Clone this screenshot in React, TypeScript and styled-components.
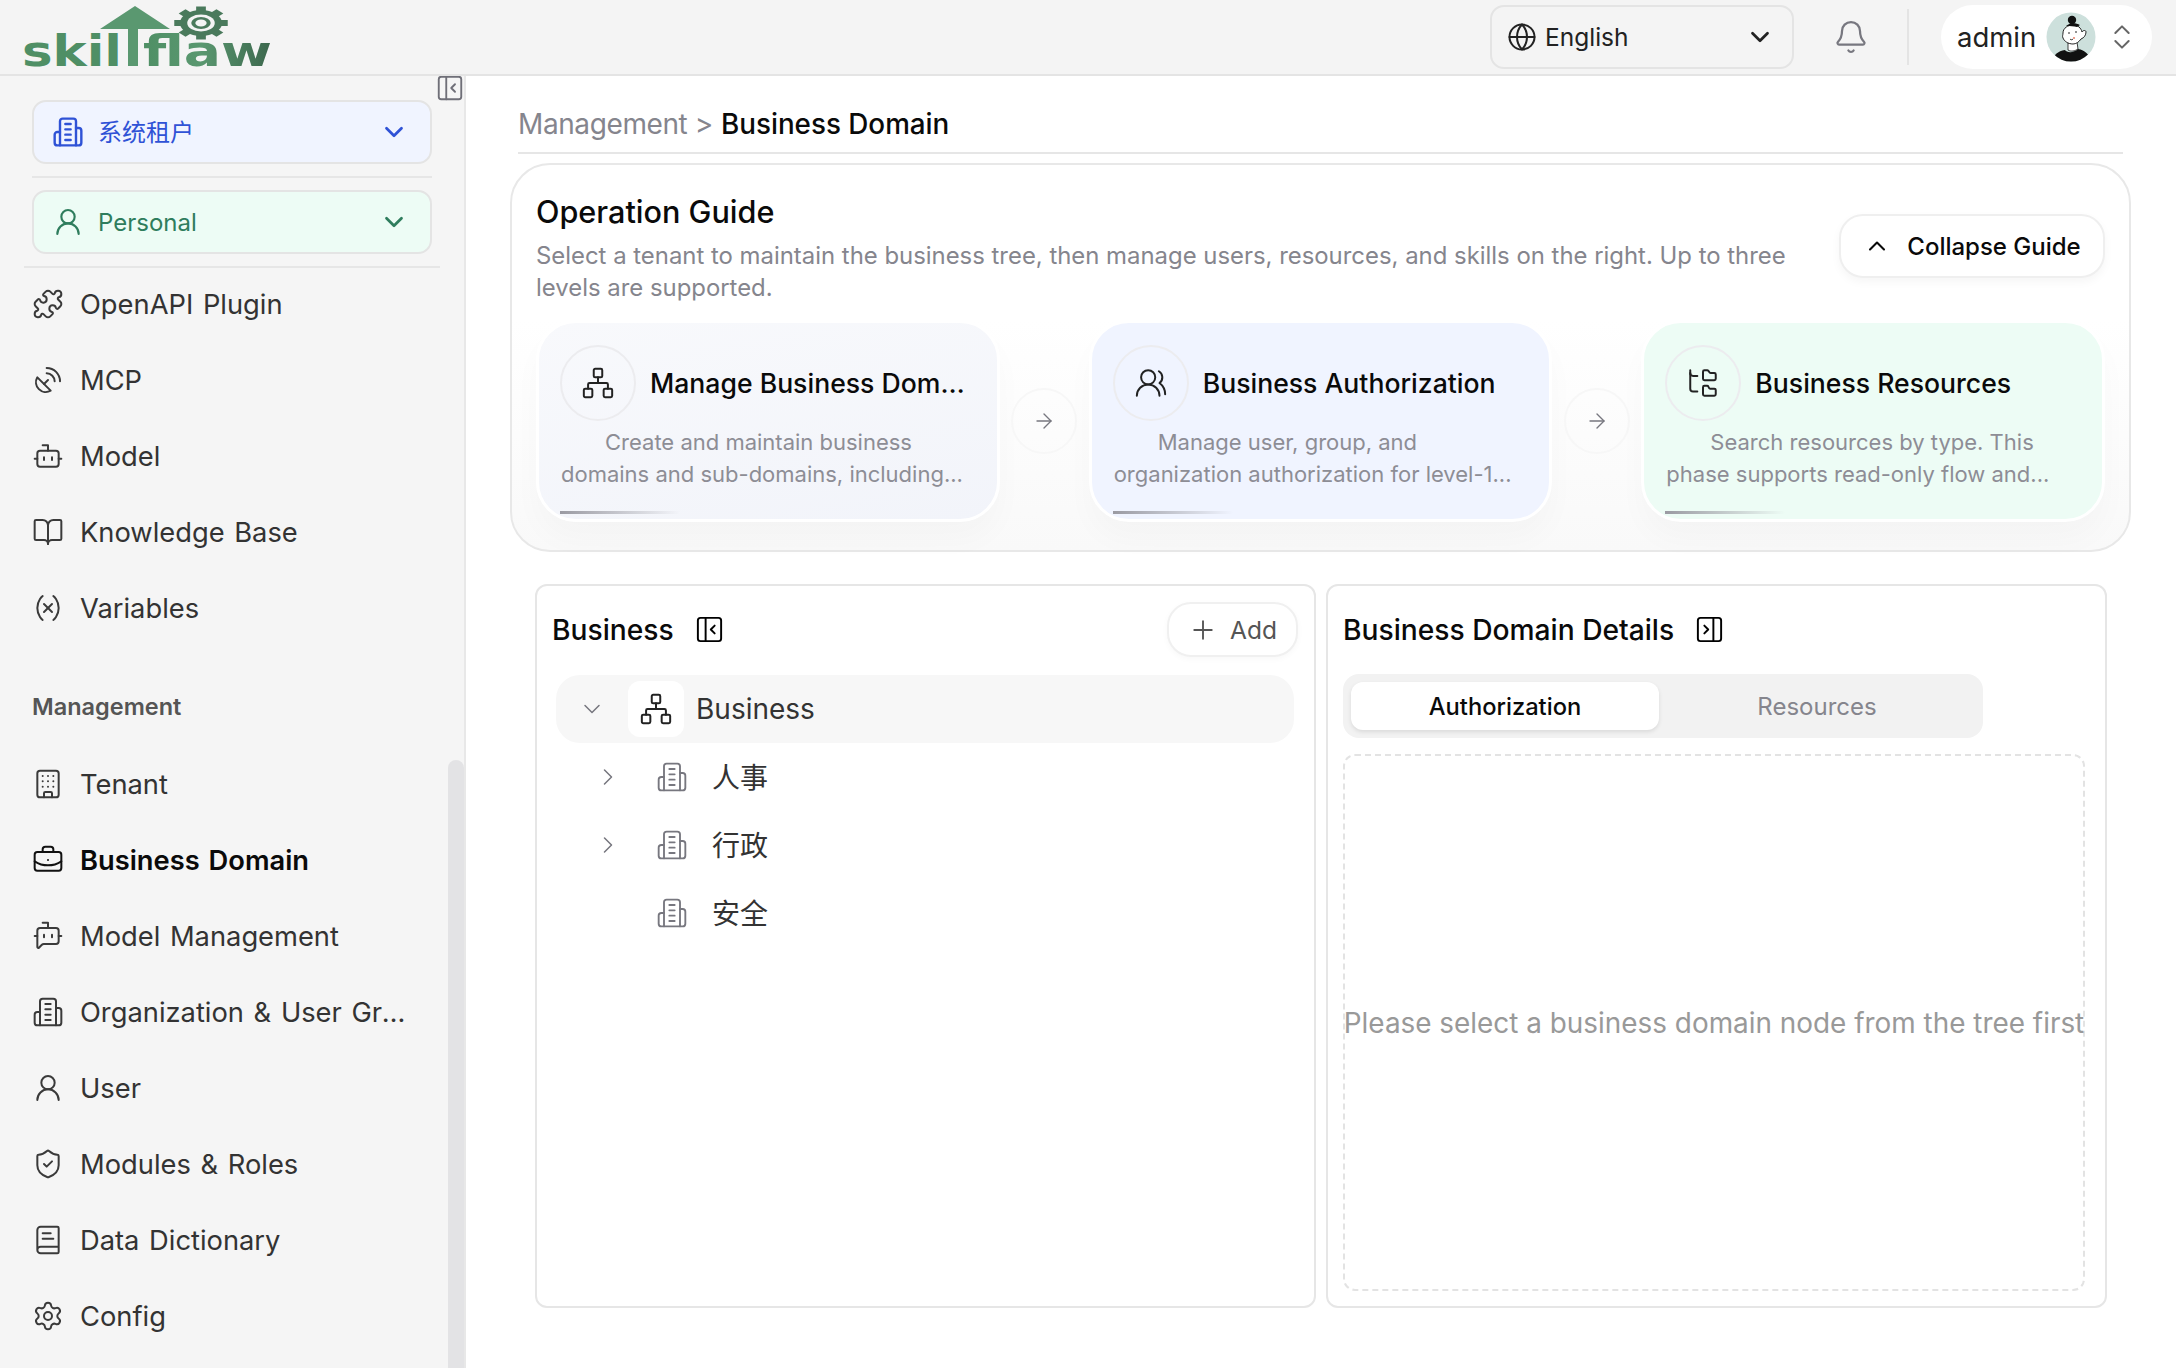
import React from 'react';
import styled, { createGlobalStyle } from 'styled-components';
import {
	ArrowRight,
	Bell,
	BookOpen,
	BookText,
	Bot,
	BotMessageSquare,
	BriefcaseBusiness,
	Building,
	ChevronDown,
	ChevronRight,
	ChevronUp,
	ChevronsUpDown,
	FolderTree,
	Globe,
	Network,
	PanelLeftClose,
	PanelRightClose,
	Plus,
	Puzzle,
	SatelliteDish,
	Settings,
	ShieldCheck,
	UserRound,
	UsersRound,
	Variable,
} from 'lucide-react';

const FONT = `Inter, "Noto Sans CJK SC", "Noto Sans", sans-serif`;

const GlobalStyle = createGlobalStyle`
	* {
		box-sizing: border-box;
	}
	html, body {
		margin: 0;
		padding: 0;
		background: #fff;
		font-family: ${FONT};
	}
`;

const Page = styled.div`
	width: 2176px;
	height: 1368px;
	overflow: hidden;
	display: flex;
	flex-direction: column;
	font-family: ${FONT};
`;

/* ---------- top bar ---------- */
const TopBar = styled.header`
	height: 76px;
	flex: none;
	display: flex;
	align-items: center;
	padding: 0 24px 0 21px;
	background: #f4f4f4;
	border-bottom: 2px solid #e4e4e4;
`;
const LogoSvg = styled.svg`
	width: 252px;
	height: 70px;
	flex: none;
`;
const LangSelect = styled.div`
	width: 304px;
	height: 64px;
	margin-left: auto;
	display: flex;
	align-items: center;
	padding: 0 17px 0 15px;
	border: 2px solid #e4e4e4;
	border-radius: 14px;
	font-size: 24.5px;
	color: #222;
	svg:last-child {
		margin-left: auto;
	}
	span {
		margin-left: 8px;
	}
`;
const BellWrap = styled.div`
	width: 113px;
	display: flex;
	justify-content: center;
	color: #77777f;
`;
const VDivider = styled.div`
	width: 2px;
	height: 56px;
	background: #e4e4e4;
`;
const UserPill = styled.div`
	width: 211px;
	height: 64px;
	margin-left: 32px;
	padding: 0 14px 0 16px;
	display: flex;
	align-items: center;
	background: #fff;
	border-radius: 32px;
	font-size: 27.5px;
	color: #222;
	svg:last-child {
		margin-left: auto;
		color: #666;
	}
`;
const AvatarSvg = styled.svg`
	width: 50px;
	height: 50px;
	margin-left: 10px;
	flex: none;
`;

/* ---------- sidebar ---------- */
const Body = styled.div`
	flex: 1;
	min-height: 0;
	display: flex;
`;
const Sidebar = styled.aside`
	position: relative;
	width: 466px;
	flex: none;
	background: #f5f5f5;
	border-right: 2px solid #e8e8e8;
	padding-top: 24px;
	overflow: hidden;
`;
const CollapseBtn = styled.div`
	position: absolute;
	top: -3px;
	right: -1px;
	width: 30px;
	height: 30px;
	display: flex;
	align-items: center;
	justify-content: center;
	color: #6f6f78;
`;
const ScrollThumb = styled.div`
	position: absolute;
	top: 684px;
	right: 0;
	width: 16px;
	height: 640px;
	border-radius: 8px;
	background: #e3e3e5;
`;
const ScopeSelect = styled.div<{ $tone: 'blue' | 'green' }>`
	width: 400px;
	height: 64px;
	margin-left: 32px;
	padding: 0 21px 0 18px;
	display: flex;
	align-items: center;
	border: 2px solid #e4e4e4;
	border-radius: 14px;
	font-size: 24px;
	background: ${(p) => (p.$tone === 'blue' ? '#f0f4ff' : '#edfcf5')};
	color: ${(p) => (p.$tone === 'blue' ? '#2f52d6' : '#2f7d5d')};
	span {
		margin-left: 14px;
		padding-bottom: ${(p) => (p.$tone === 'blue' ? '3px' : '0')};
	}
	svg:last-child {
		margin-left: auto;
	}
`;
const SideRule = styled.div<{ $wide?: boolean }>`
	height: 2px;
	background: #e6e6e6;
	margin: 12px 0 ${(p) => (p.$wide ? '-2px' : '12px')} ${(p) => (p.$wide ? '24px' : '32px')};
	width: ${(p) => (p.$wide ? '416px' : '400px')};
`;
const NavItem = styled.div<{ $active?: boolean }>`
	height: 76px;
	display: flex;
	align-items: center;
	padding-left: 32px;
	font-size: 27.3px;
	word-spacing: 2px;
	font-weight: ${(p) => (p.$active ? 600 : 400)};
	color: ${(p) => (p.$active ? '#0a0a0a' : '#333')};
	span {
		margin-left: 16px;
		width: 335px;
		white-space: nowrap;
		overflow: hidden;
		text-overflow: ellipsis;
	}
	svg {
		flex: none;
		color: ${(p) => (p.$active ? '#111' : '#3a3a3a')};
	}
`;
const NavLabel = styled.div`
	height: 32px;
	margin: 45px 0 23px 32px;
	font-size: 23.5px;
	line-height: 32px;
	font-weight: 600;
	color: #555;
`;

/* ---------- main ---------- */
const Main = styled.main`
	flex: 1;
	min-width: 0;
	padding: 0 53px 0 52px;
	background: #fff;
`;
const Breadcrumb = styled.div`
	height: 78px;
	padding-top: 19px;
	display: flex;
	align-items: center;
	border-bottom: 2px solid #e6e6e6;
	font-size: 28px;
	letter-spacing: -0.4px;
	color: #85858d;
	b {
		font-weight: 500;
		font-size: 27.8px;
		color: #0a0a0a;
		margin-left: 8px;
		letter-spacing: 0;
	}
`;
const GuideCard = styled.section`
	height: 389px;
	margin: 9px -8px 0;
	padding: 25px 24px 0;
	border: 2px solid #e8e8e8;
	border-radius: 40px;
	background: linear-gradient(180deg, #fff 40%, #f9f9f9 100%);
`;
const GuideHead = styled.div`
	display: flex;
	align-items: flex-start;
	justify-content: space-between;
`;
const GuideTitle = styled.h2`
	margin: 0;
	font-size: 30.6px;
	line-height: 44px;
	font-weight: 500;
	color: #0a0a0a;
`;
const GuideText = styled.p`
	margin: 6px 0 0;
	width: 1270px;
	font-size: 23.9px;
	line-height: 32px;
	color: #85858d;
`;
const CollapseGuide = styled.button`
	width: 266px;
	height: 64px;
	margin-top: 24px;
	padding-left: 6px;
	display: flex;
	align-items: center;
	justify-content: center;
	gap: 16px;
	background: #fff;
	border: 2px solid #efefef;
	border-radius: 24px;
	box-shadow: 0 4px 10px rgba(0, 0, 0, 0.04);
	font-family: inherit;
	font-size: 24px;
	font-weight: 500;
	color: #0a0a0a;
`;
const Steps = styled.div`
	display: flex;
	margin-top: 16px;
`;
const StepCard = styled.div<{ $bg: string }>`
	flex: 1;
	min-width: 0;
	height: 202px;
	padding: 22px 19px 3px 21px;
	border: 3px solid #fff;
	border-radius: 40px;
	background: ${(p) => p.$bg};
	box-shadow: 0 18px 30px rgba(0, 0, 0, 0.025);
`;
const StepHead = styled.div`
	display: flex;
	align-items: center;
	gap: 14px;
`;
const StepIcon = styled.div`
	width: 76px;
	height: 76px;
	flex: none;
	display: flex;
	align-items: center;
	justify-content: center;
	border: 2px solid #ececef;
	border-radius: 50%;
	color: #222;
`;
const StepTitle = styled.div`
	min-width: 0;
	font-size: 26.6px;
	font-weight: 500;
	color: #0a0a0a;
	white-space: nowrap;
	overflow: hidden;
	text-overflow: ellipsis;
`;
const StepText = styled.div`
	margin-top: 5px;
	padding-left: 1px;
	height: 64px;
	font-size: 22px;
	line-height: 32px;
	color: #8d8d95;
	text-indent: 2em;
	overflow: hidden;
`;
const StepLine = styled.div`
	width: 120px;
	height: 3px;
	margin-top: 21px;
	background: linear-gradient(90deg, #9a9aa2, rgba(154, 154, 162, 0));
`;
const StepArrow = styled.div`
	width: 89px;
	flex: none;
	display: flex;
	align-items: center;
	justify-content: center;
	color: #77777f;
	div {
		width: 66px;
		height: 66px;
		display: flex;
		align-items: center;
		justify-content: center;
		border: 2px solid #f7f7f7;
		border-radius: 50%;
	}
`;

/* ---------- panels ---------- */
const Panels = styled.div`
	display: flex;
	gap: 10px;
	margin: 32px 16px 0 17px;
`;
const Panel = styled.section<{ $pr: number }>`
	width: 781px;
	height: 724px;
	display: flex;
	flex-direction: column;
	padding: 16px ${(p) => p.$pr}px 15px 15px;
	border: 2px solid #e6e6e6;
	border-radius: 12px;
	background: #fff;
`;
const PanelHead = styled.div`
	height: 55px;
	flex: none;
	display: flex;
	align-items: center;
`;
const PanelTitle = styled.h3`
	margin: 0 20px 0 0;
	font-size: 28.2px;
	font-weight: 500;
	color: #0a0a0a;
`;
const AddBtn = styled.button`
	width: 131px;
	height: 55px;
	margin-left: auto;
	display: flex;
	align-items: center;
	justify-content: center;
	gap: 12px;
	background: #fff;
	border: 2px solid #f0f0f0;
	border-radius: 24px;
	box-shadow: 0 2px 6px rgba(0, 0, 0, 0.03);
	font-family: inherit;
	font-size: 24.5px;
	color: #555;
`;
const TreeRow = styled.div<{ $root?: boolean }>`
	height: 68px;
	margin-right: 4px;
	margin-left: 4px;
	display: flex;
	align-items: center;
	padding-left: ${(p) => (p.$root ? '22px' : '38px')};
	border-radius: 24px;
	background: ${(p) => (p.$root ? '#f7f7f7' : 'transparent')};
	font-size: 28px;
	color: #333;
`;
const TreeChevron = styled.div`
	width: 28px;
	height: 28px;
	flex: none;
	display: flex;
	align-items: center;
	justify-content: center;
	color: #77777f;
`;
const RootIcon = styled.div`
	width: 56px;
	height: 56px;
	margin: 0 12px 0 22px;
	flex: none;
	display: flex;
	align-items: center;
	justify-content: center;
	background: #fff;
	border-radius: 12px;
	color: #222;
`;
const NodeIcon = styled.div`
	margin: 0 24px 0 34px;
	display: flex;
	color: #77777f;
`;
const NodeName = styled.span`
	padding-bottom: 2px;
`;
const Tree = styled.div`
	margin-top: 18px;
`;
const Tabs = styled.div`
	width: 640px;
	height: 64px;
	margin-top: 17px;
	padding: 8px;
	flex: none;
	display: flex;
	background: #f2f2f2;
	border-radius: 16px;
`;
const Tab = styled.div<{ $active?: boolean }>`
	flex: ${(p) => (p.$active ? '0 0 308px' : '1')};
	display: flex;
	align-items: center;
	justify-content: center;
	border-radius: 12px;
	font-size: ${(p) => (p.$active ? '23.7px' : '24px')};
	font-weight: ${(p) => (p.$active ? 500 : 400)};
	background: ${(p) => (p.$active ? '#fff' : 'transparent')};
	color: ${(p) => (p.$active ? '#0a0a0a' : '#85858d')};
	box-shadow: ${(p) => (p.$active ? '0 2px 4px rgba(0,0,0,0.1)' : 'none')};
`;
const EmptyBox = styled.div`
	flex: 1;
	margin-top: 16px;
	display: flex;
	align-items: center;
	justify-content: center;
	border: 2px dashed #e3e3e3;
	border-radius: 12px;
	font-size: 27.9px;
	color: #999;
	white-space: nowrap;
`;

// the older lucide Building2: tall block with two low wings
const TallBuilding = ({ size, strokeWidth }: { size: number; strokeWidth: number }) => (
	<svg width={size} height={size} viewBox="0 0 24 24" fill="none" stroke="currentColor" strokeWidth={strokeWidth} strokeLinecap="round" strokeLinejoin="round">
		<path d="M6 22V4a2 2 0 0 1 2-2h8a2 2 0 0 1 2 2v18Z" />
		<path d="M6 12H4a2 2 0 0 0-2 2v6a2 2 0 0 0 2 2h2" />
		<path d="M18 9h2a2 2 0 0 1 2 2v9a2 2 0 0 1-2 2h-2" />
		<path d="M10 6h4M10 10h4M10 14h4M10 18h4" />
	</svg>
);

const Logo = () => (
	<LogoSvg viewBox="0 0 252 70">
		<defs>
			<linearGradient id="lg" x1="0" x2="1" y1="0" y2="0">
				<stop offset="0" stopColor="#4f8f65" />
				<stop offset="0.45" stopColor="#5a9870" />
				<stop offset="1" stopColor="#3c674d" />
			</linearGradient>
		</defs>
		<text x="1" y="64" fontFamily="DejaVu Sans" fontWeight="700" fontSize="42" fill="#4f8f65" textLength="100" lengthAdjust="spacingAndGlyphs">
			skil
		</text>
		<text x="122" y="64" fontFamily="DejaVu Sans" fontWeight="700" fontSize="42" fill="url(#lg)" textLength="129" lengthAdjust="spacingAndGlyphs">
			flaw
		</text>
		<path d="M114 4 79 27h28v37h10V27h32Z" fill="#5a9870" />
		<g transform="translate(180 21) scale(1.62 1)" fill="#4a7a5c">
			<circle r="13" />
			{[0, 45, 90, 135, 180, 225, 270, 315].map((a) => (
				<rect key={a} x="-3" y="-16.5" width="6" height="5" transform={`rotate(${a})`} />
			))}
			<circle r="8.5" fill="#f4f4f4" />
			<circle r="6" />
			<circle r="3.5" fill="#f4f4f4" />
		</g>
	</LogoSvg>
);

const Avatar = () => (
	<AvatarSvg viewBox="0 0 50 50">
		<defs>
			<clipPath id="av">
				<circle cx="25" cy="25" r="24.5" />
			</clipPath>
		</defs>
		<g clipPath="url(#av)">
			<rect width="50" height="50" fill="#cde0dc" />
			<path d="M6 50c1-7 6-11 13-12 2 3 9 3 13-1 7 1 12 6 13 13Z" fill="#111" />
			<path d="M22 31v7c3 2 7 1 10-1l-1-7Z" fill="#fff" stroke="#111" strokeWidth="0.8" />
			<path d="M17 21c0-5 5-8 10-8 5 0 8 3 9 7 1-2 4-2 4 0 0 3-2 6-5 7-2 3-5 5-8 5-5 0-9-3-10-6-1-2 0-3 0-5Z" fill="#fff" stroke="#111" strokeWidth="0.9" />
			<path d="M20 14c3-3 9-4 14-1l-3 2c-3-1-7-1-11-1Z" fill="#111" />
			<circle cx="26" cy="8" r="4.2" fill="#111" />
			<path d="M22 21h2M29 20h2M24 27c1 1 2 1 3 0" stroke="#111" strokeWidth="0.9" fill="none" />
			<circle cx="28" cy="26" r="1" fill="#e8806a" />
		</g>
	</AvatarSvg>
);

const topNav = [
	{ label: 'OpenAPI Plugin', Icon: Puzzle },
	{ label: 'MCP', Icon: SatelliteDish },
	{ label: 'Model', Icon: Bot },
	{ label: 'Knowledge Base', Icon: BookOpen },
	{ label: 'Variables', Icon: Variable },
];
const manageNav = [
	{ label: 'Tenant', Icon: Building },
	{ label: 'Business Domain', Icon: BriefcaseBusiness, active: true },
	{ label: 'Model Management', Icon: BotMessageSquare },
	{ label: 'Organization & User Groups', Icon: TallBuilding },
	{ label: 'User', Icon: UserRound },
	{ label: 'Modules & Roles', Icon: ShieldCheck },
	{ label: 'Data Dictionary', Icon: BookText },
	{ label: 'Config', Icon: Settings },
];
const steps = [
	{
		title: 'Manage Business Domains',
		text: 'Create and maintain business domains and sub-domains, including...',
		bg: 'linear-gradient(170deg, #f8f9fc, #f2f4fa)',
		Icon: Network,
	},
	{
		title: 'Business Authorization',
		text: 'Manage user, group, and organization authorization for level-1...',
		bg: '#f0f4ff',
		Icon: UsersRound,
	},
	{
		title: 'Business Resources',
		text: 'Search resources by type. This phase supports read-only flow and...',
		bg: '#edfcf5',
		Icon: FolderTree,
	},
];

function App() {
	return (
		<Page>
			<GlobalStyle />
			<TopBar>
				<Logo />
				<LangSelect>
					<Globe size={30} strokeWidth={1.6} />
					<span>English</span>
					<ChevronDown size={30} strokeWidth={2.2} />
				</LangSelect>
				<BellWrap>
					<Bell size={36} strokeWidth={1.5} />
				</BellWrap>
				<VDivider />
				<UserPill>
					admin
					<Avatar />
					<ChevronsUpDown size={32} strokeWidth={1.5} />
				</UserPill>
			</TopBar>
			<Body>
				<Sidebar>
					<CollapseBtn>
						<PanelLeftClose size={32} strokeWidth={1.5} />
					</CollapseBtn>
					<ScrollThumb />
					<ScopeSelect $tone="blue">
						<TallBuilding size={32} strokeWidth={1.8} />
						<span>系统租户</span>
						<ChevronDown size={30} strokeWidth={2.2} />
					</ScopeSelect>
					<SideRule />
					<ScopeSelect $tone="green">
						<UserRound size={32} strokeWidth={1.6} />
						<span>Personal</span>
						<ChevronDown size={30} strokeWidth={2.2} />
					</ScopeSelect>
					<SideRule $wide />
					{topNav.map(({ label, Icon }) => (
						<NavItem key={label}>
							<Icon size={32} strokeWidth={1.5} />
							<span>{label}</span>
						</NavItem>
					))}
					<NavLabel>Management</NavLabel>
					{manageNav.map(({ label, Icon, active }) => (
						<NavItem key={label} $active={active}>
							<Icon size={32} strokeWidth={1.5} />
							<span>{label}</span>
						</NavItem>
					))}
				</Sidebar>
				<Main>
					<Breadcrumb>
						Management &gt;<b>Business Domain</b>
					</Breadcrumb>
					<GuideCard>
						<GuideHead>
							<div>
								<GuideTitle>Operation Guide</GuideTitle>
								<GuideText>
									Select a tenant to maintain the business tree, then manage users, resources, and skills on the right. Up to
									three levels are supported.
								</GuideText>
							</div>
							<CollapseGuide>
								<ChevronUp size={28} strokeWidth={1.8} />
								Collapse Guide
							</CollapseGuide>
						</GuideHead>
						<Steps>
							{steps.map(({ title, text, bg, Icon }, i) => (
								<React.Fragment key={title}>
									{i > 0 && (
										<StepArrow>
											<div>
												<ArrowRight size={24} strokeWidth={1.4} />
											</div>
										</StepArrow>
									)}
									<StepCard $bg={bg}>
										<StepHead>
											<StepIcon>
												<Icon size={34} strokeWidth={1.4} />
											</StepIcon>
											<StepTitle>{title}</StepTitle>
										</StepHead>
										<StepText>{text}</StepText>
										<StepLine />
									</StepCard>
								</React.Fragment>
							))}
						</Steps>
					</GuideCard>
					<Panels>
						<Panel $pr={16}>
							<PanelHead>
								<PanelTitle>Business</PanelTitle>
								<PanelLeftClose size={31} strokeWidth={1.5} />
								<AddBtn>
									<Plus size={30} strokeWidth={1.5} />
									Add
								</AddBtn>
							</PanelHead>
							<Tree>
								<TreeRow $root>
									<TreeChevron>
										<ChevronDown size={32} strokeWidth={1.3} />
									</TreeChevron>
									<RootIcon>
										<Network size={34} strokeWidth={1.4} />
									</RootIcon>
									Business
								</TreeRow>
								{['人事', '行政', '安全'].map((name, i) => (
									<TreeRow key={name}>
										<TreeChevron>{i < 2 && <ChevronRight size={32} strokeWidth={1.3} />}</TreeChevron>
										<NodeIcon>
											<TallBuilding size={32} strokeWidth={1.4} />
										</NodeIcon>
										<NodeName>{name}</NodeName>
									</TreeRow>
								))}
							</Tree>
						</Panel>
						<Panel $pr={20}>
							<PanelHead>
								<PanelTitle>Business Domain Details</PanelTitle>
								<PanelRightClose size={31} strokeWidth={1.5} />
							</PanelHead>
							<Tabs>
								<Tab $active>Authorization</Tab>
								<Tab>Resources</Tab>
							</Tabs>
							<EmptyBox>Please select a business domain node from the tree first</EmptyBox>
						</Panel>
					</Panels>
				</Main>
			</Body>
		</Page>
	);
}

export default App;
